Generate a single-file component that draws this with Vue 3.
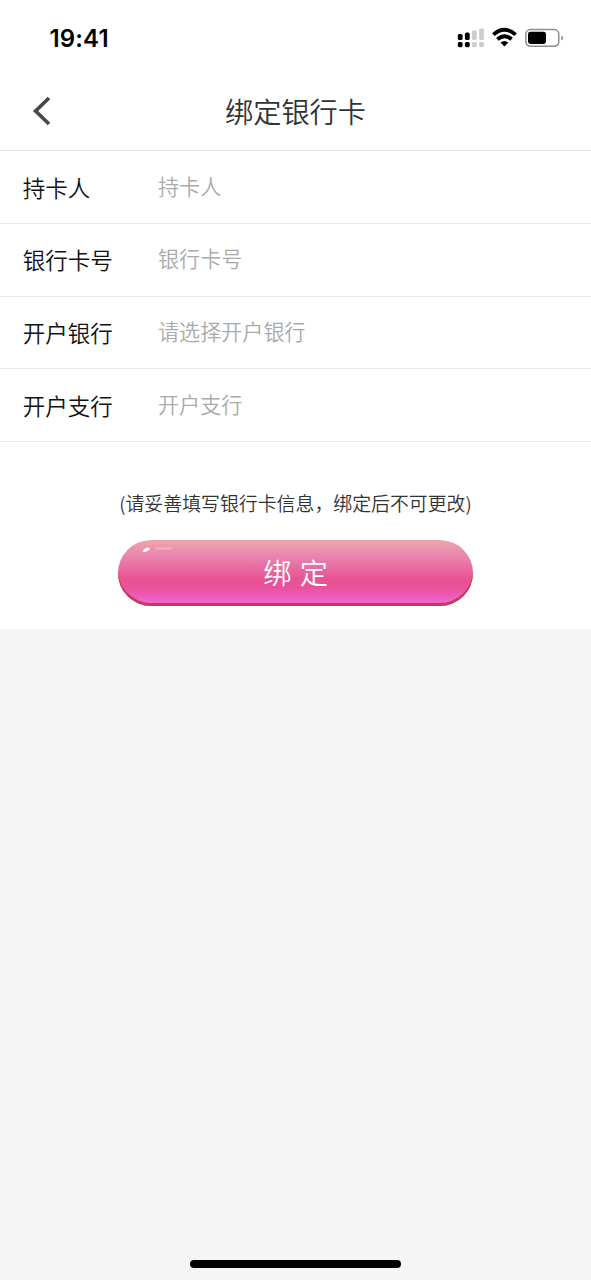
<script setup>
const fields = [
  { label: '持卡人', hint: '持卡人' },
  { label: '银行卡号', hint: '银行卡号' },
  { label: '开户银行', hint: '请选择开户银行' },
  { label: '开户支行', hint: '开户支行' },
]
</script>

<template>
  <div class="screen" lang="zh-CN">
    <div class="panel">
      <div class="status">
        <span class="time">19:41</span>
        <svg class="status-icons" width="110" height="24" viewBox="0 0 110 24">
          <g fill="#000">
            <rect x="2.8" y="8" width="4.8" height="6" rx="1.6" />
            <rect x="2.8" y="16" width="4.8" height="5.2" rx="1.6" />
            <rect x="9.9" y="6.6" width="4.8" height="7.4" rx="1.6" />
            <rect x="9.9" y="16" width="4.8" height="5.2" rx="1.6" />
          </g>
          <g fill="#ccc">
            <rect x="17" y="4.6" width="4.8" height="9.4" rx="1.4" />
            <rect x="17" y="16" width="4.8" height="5.2" rx="1.6" />
            <rect x="24.1" y="2.6" width="4.8" height="11.4" rx="1.4" />
            <rect x="24.1" y="16" width="4.8" height="5.2" rx="1.6" />
          </g>
          <g fill="none" stroke="#000" stroke-width="3.8">
            <path d="M38.4 8.6Q49.4-1 60.6 8.6" />
            <path d="M42.4 13.3Q49.4 7 56.6 13.3" />
          </g>
          <path d="M45.5 16.6Q49.4 13.2 53.4 16.6L49.4 20.6Z" fill="#000" />
          <rect x="70.8" y="3.6" width="33" height="16.6" rx="4.6" fill="none" stroke="#8e8e8e" stroke-width="1.5" />
          <rect x="73" y="5.8" width="18" height="12.2" rx="2.4" fill="#000" />
          <path d="M106.3 9.4Q108.3 10.4 108.3 12T106.3 14.4Z" fill="#8e8e8e" />
        </svg>
      </div>

      <header class="nav">
        <svg class="back" width="20" height="32" viewBox="0 0 20 32">
          <path d="M17 3L3.6 16L17 29" fill="none" stroke="#484848" stroke-width="3.7" />
        </svg>
        <h1 class="title">绑定银行卡</h1>
      </header>

      <div v-for="field in fields" :key="field.label" class="row">
        <span class="label">{{ field.label }}</span>
        <span class="hint">{{ field.hint }}</span>
      </div>

      <p class="note">(请妥善填写银行卡信息，绑定后不可更改)</p>

      <button class="submit" type="button">
        <svg class="shine" width="40" height="12" viewBox="0 0 40 12">
          <path d="M2.4 7.6Q4 3.6 8.6 3.4Q11.4 4.6 8 6.8Q5 8.6 2.4 7.6Z" fill="#fff" opacity=".95" />
          <rect x="15" y="3.4" width="17" height="2" rx="1" fill="#fff" opacity=".28" />
        </svg>
        <span class="submit-text">绑 定</span>
      </button>
    </div>
    <div class="home-bar"></div>
  </div>
</template>

<style>
body {
  background: #f5f5f5;
}
</style>

<style scoped>
.screen {
  display: flex;
  flex-direction: column;
  justify-content: space-between;
  width: 591px;
  height: 1280px;
  overflow: hidden;
  background: #f5f5f5;
  font-family: "Noto Sans CJK SC", sans-serif;
}
.panel {
  display: flex;
  flex-direction: column;
  height: 629px;
  background: #fff;
}
.status {
  display: flex;
  justify-content: space-between;
  align-items: center;
  box-sizing: border-box;
  height: 72px;
  padding: 3px 26px 0 49.5px;
}
.time {
  margin-top: 2px;
  font: 600 24px/28px Inter, sans-serif;
  letter-spacing: 0.15px;
  color: #000;
}
.nav {
  display: grid;
  grid-template-columns: 60px 1fr 60px;
  align-items: center;
  box-sizing: border-box;
  height: 79px;
  border-bottom: 1px solid #e6e6e6;
}
.back {
  margin-left: 32px;
}
.title {
  margin: 0;
  font-size: 28.2px;
  font-weight: 350;
  line-height: 40px;
  text-align: center;
  color: #333;
}
.row {
  display: flex;
  align-items: center;
  box-sizing: border-box;
  height: 72.75px;
  padding-left: 22.8px;
  border-bottom: 1px solid #e8e8e8;
}
.label {
  width: 135.2px;
  margin-top: -0.6px;
  font-size: 22.5px;
  font-weight: 350;
  line-height: 32px;
  color: #111;
}
.hint {
  margin-top: -2.4px;
  font-size: 21.1px;
  font-weight: 350;
  line-height: 30px;
  color: #aaa;
}
.note {
  margin: 47px 0 0;
  font-size: 18.9px;
  font-weight: 350;
  line-height: 28px;
  text-align: center;
  white-space: nowrap;
  color: #333;
}
.submit {
  position: relative;
  box-sizing: border-box;
  width: 355px;
  height: 66px;
  margin: 22.8px 0 0 118px;
  padding: 0 0 1px;
  border: 0;
  border-radius: 33px;
  background: linear-gradient(#efa5ab 0%, #e986ae 24%, #e7679f 45%, #e95394 59%, #e8519b 72%, #eb5bb9 84%, #ee67d2 95%);
  box-shadow: inset 0 -3px 0 #c83a50;
  font-family: inherit;
  color: #fff;
}
.shine {
  position: absolute;
  top: 4px;
  left: 22px;
}
.submit-text {
  font-size: 28.2px;
  font-weight: 350;
  line-height: 40px;
  word-spacing: 2px;
}
.home-bar {
  align-self: center;
  width: 211px;
  height: 8px;
  margin-bottom: 12px;
  border-radius: 4px;
  background: #000;
}
</style>
